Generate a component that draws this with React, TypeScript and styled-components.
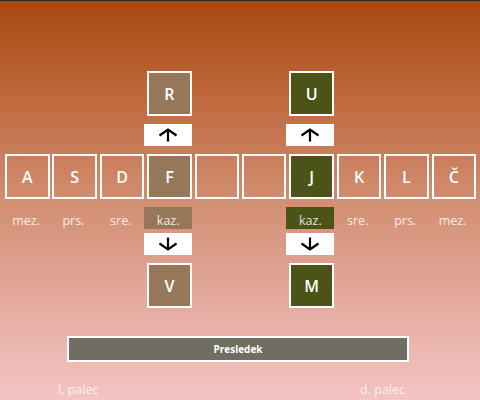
import styled, { createGlobalStyle } from 'styled-components';

const GlobalStyle = createGlobalStyle`
  html, body {
    margin: 0;
    padding: 0;
  }
  body {
    font-family: "Open Sans", "Noto Sans", sans-serif;
  }
`;

type Tone = 'plain' | 'left' | 'right';

const toneColor: Record<Tone, string> = {
  plain: 'transparent',
  left: '#97775a',
  right: '#4b5316',
};

const home: { ch: string; tone: Tone }[] = [
  { ch: 'A', tone: 'plain' },
  { ch: 'S', tone: 'plain' },
  { ch: 'D', tone: 'plain' },
  { ch: 'F', tone: 'left' },
  { ch: '', tone: 'plain' },
  { ch: '', tone: 'plain' },
  { ch: 'J', tone: 'right' },
  { ch: 'K', tone: 'plain' },
  { ch: 'L', tone: 'plain' },
  { ch: 'Č', tone: 'plain' },
];

const fingers: { text: string; tone?: Tone }[] = [
  { text: 'mez.' },
  { text: 'prs.' },
  { text: 'sre.' },
  { text: 'kaz.', tone: 'left' },
  { text: '' },
  { text: '' },
  { text: 'kaz.', tone: 'right' },
  { text: 'sre.' },
  { text: 'prs.' },
  { text: 'mez.' },
];

// wide, flat arrowheads like the reference glyphs
const UpArrow = () => (
  <svg width="22" height="14" viewBox="0 0 22 14">
    <path d="M11 13.5V2M2.5 7.5L11 1.5 19.5 7.5" fill="none" stroke="#000" strokeWidth="2.2" />
  </svg>
);

const DownArrow = () => (
  <svg width="22" height="14" viewBox="0 0 22 14">
    <path d="M11 0.5V12M2.5 6.5L11 12.5 19.5 6.5" fill="none" stroke="#000" strokeWidth="2.2" />
  </svg>
);

const App = () => {
  return (
    <>
      <GlobalStyle />
      <Screen>
        <Row $top={0}>
          <Key $tone="left" $col={4}>R</Key>
          <Key $tone="right" $col={7}>U</Key>
        </Row>
        <ArrowRow $top={8}>
          <ArrowBox $col={4}><UpArrow /></ArrowBox>
          <ArrowBox $col={7}><UpArrow /></ArrowBox>
        </ArrowRow>
        <Row $top={8}>
          {home.map((k, i) => (
            <Key key={i} $tone={k.tone} $col={i + 1}>{k.ch}</Key>
          ))}
        </Row>
        <ArrowRow $top={8}>
          {fingers.map((f, i) =>
            f.text ? (
              <Finger key={i} $col={i + 1} $tone={f.tone}>{f.text}</Finger>
            ) : null
          )}
        </ArrowRow>
        <ArrowRow $top={4}>
          <ArrowBox $col={4}><DownArrow /></ArrowBox>
          <ArrowBox $col={7}><DownArrow /></ArrowBox>
        </ArrowRow>
        <Row $top={8}>
          <Key $tone="left" $col={4}>V</Key>
          <Key $tone="right" $col={7}>M</Key>
        </Row>
        <SpaceBar>Presledek</SpaceBar>
        <Thumbs>
          <Thumb>l. palec</Thumb>
          <Thumb>d. palec</Thumb>
        </Thumbs>
      </Screen>
    </>
  );
};

const Screen = styled.div`
  box-sizing: border-box;
  width: 480px;
  height: 400px;
  overflow: hidden;
  border-top: 1px solid #2b2b2b;
  padding-top: 70px;
  background: linear-gradient(to bottom, #a84810 0%, #c06a40 25%, #d28e71 50%, #e4aa9e 75%, #f3c4c3 100%);
`;

const Row = styled.div<{ $top: number }>`
  display: grid;
  grid-template-columns: repeat(10, 44.5px);
  grid-template-rows: 45px;
  column-gap: 2.9px;
  padding-left: 5px;
  margin-top: ${(p) => p.$top}px;
`;

const ArrowRow = styled(Row)`
  grid-template-rows: 22px;
`;

const Key = styled.div<{ $tone: Tone; $col: number }>`
  grid-column: ${(p) => p.$col};
  box-sizing: border-box;
  border: 2px solid #fff;
  background: ${(p) => toneColor[p.$tone]};
  color: #fff;
  font-size: 16px;
  font-weight: 600;
  display: flex;
  align-items: center;
  justify-content: center;
`;

const ArrowBox = styled.div<{ $col: number }>`
  grid-column: ${(p) => p.$col};
  width: 48px;
  margin-left: -3px;
  background: #fff;
  display: flex;
  align-items: center;
  justify-content: center;
`;

const Finger = styled.div<{ $col: number; $tone?: Tone }>`
  grid-column: ${(p) => p.$col};
  width: 48px;
  margin-left: -3px;
  background: ${(p) => (p.$tone ? toneColor[p.$tone] : 'transparent')};
  color: rgba(255, 255, 255, 0.85);
  font-size: 12.5px;
  line-height: 22px;
  padding-top: 3px;
  box-sizing: border-box;
  text-align: center;
`;

const SpaceBar = styled.div`
  box-sizing: border-box;
  width: 342px;
  height: 26px;
  margin: 28px 0 0 67px;
  border: 2px solid #fff;
  background: #706e62;
  color: #fff;
  font-size: 10px;
  font-weight: 700;
  display: flex;
  align-items: center;
  justify-content: center;
`;

const Thumbs = styled.div`
  display: flex;
  justify-content: space-between;
  padding: 0 75px 0 58px;
  margin-top: 20px;
`;

const Thumb = styled.div`
  color: rgba(255, 255, 255, 0.8);
  font-size: 12.5px;
  line-height: 16px;
`;

export default App;
